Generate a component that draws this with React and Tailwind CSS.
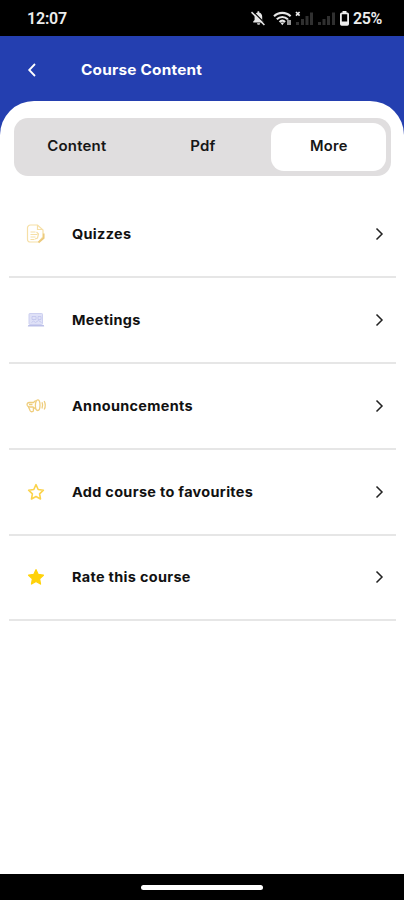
import React from 'react';

function StatusBar() {
  return (
    <div className="flex h-9 shrink-0 items-center justify-between bg-black pl-[27px] pr-[22px] text-[#ededed]">
      <span className="mt-px font-['Roboto',sans-serif] text-[16px] font-semibold leading-none tracking-[-0.2px]">12:07</span>
      <div className="flex items-center">
        <svg width="91" height="18" viewBox="38 0 91 18">
          <path d="M42.200 13.500h10.400v-1l-1.400-1.500V7.800c0-2.300-1.200-4-3-4.400V2.300h-1.700v1.100c-1.900.5-2.900 2.200-2.900 4.400V11l-1.400 1.500z" fill="#e6e6e6" />
          <path d="M46 14.200h3.200a1.600 1.600 0 0 1-3.200 0z" fill="#e6e6e6" />
          <path d="M42.200 2.600L54.700 15.100" stroke="#000" strokeWidth="1.200" />
          <path d="M40.500 3.100L53.400 16" stroke="#e6e6e6" strokeWidth="1.500" />
          <g fill="none" stroke="#e6e6e6" strokeWidth="2.100">
            <path d="M63 7.300c4.600-4.600 12-4.600 16.600 0" />
            <path d="M65.800 10.300c3.200-3 7.800-3 11 0" />
            <path d="M68.500 13c1.600-1.500 4-1.500 5.600 0" />
          </g>
          <path d="M69.300 13.500h4l-2 2.700z" fill="#e6e6e6" />
          <path d="M77 10.500v5.500M79 11v5" stroke="#e6e6e6" strokeWidth="1.300" />
          <path d="M85 3l3.600 3.600M88.600 3L85 6.600" stroke="#eee" strokeWidth="1.700" />
          <g fill="#303030">
            <rect x="85" y="13" width="3" height="3" />
            <rect x="90" y="10" width="3" height="6" />
            <rect x="94.500" y="7" width="3" height="9" />
            <rect x="99" y="3.500" width="3" height="12.500" />
            <rect x="107" y="13" width="3" height="3" />
            <rect x="111.500" y="10" width="3" height="6" />
            <rect x="116" y="7" width="3" height="9" />
            <rect x="121" y="3.500" width="3" height="12.500" />
          </g>
        </svg>
        <svg width="9" height="15" viewBox="0 0 9 15" className="mr-[4px]">
          <path d="M2.500 0h4v2.500h-4z" fill="#eee" />
          <rect x="0.900" y="2.400" width="7.200" height="11.500" rx="0.800" fill="none" stroke="#eee" strokeWidth="1.800" />
          <path d="M1 10.500h7V14H1z" fill="#eee" />
        </svg>
        <span className="mt-px font-['Roboto',sans-serif] text-[16px] font-semibold leading-none tracking-[-0.4px]">25%</span>
      </div>
    </div>
  );
}

function QuizIcon() {
  return (
    <svg width="20" height="20" viewBox="0 0 20 20" fill="none" stroke="#f6dfa6" strokeWidth="1.200">
      <path d="M4.500 1h7l5.500 5v7l-4.500 5H4a2.500 2.500 0 0 1-2.500-2.500v-11A3 3 0 0 1 4.500 1z" />
      <path d="M11.500 1v4.500H17M4.500 8h5M4.500 10.500h7M4.500 13h5M4.500 15.500h4" />
      <path d="M10.500 8l2 2-1 4-2.500 1" />
      <path d="M17.700 9.500v4.500l-5.200 4.500" stroke="#ecca7e" strokeWidth="1.700" />
    </svg>
  );
}

function MeetingIcon() {
  return (
    <svg width="20" height="20" viewBox="0 0 20 20" fill="none">
      <rect x="3" y="3.500" width="13.500" height="11" rx="0.800" fill="#dfe1f7" stroke="#cdd0f0" />
      <path d="M6 6.500h4v3H6zM12 6.500h3v3h-3zM5.500 12.500l2-1.500 2 1.500 3-2 3 2" stroke="#c0c4ec" strokeWidth="0.800" />
      <path d="M2.300 15h15.500l.4 1.500H1.800z" fill="#bbbfe8" />
    </svg>
  );
}

function AnnouncementIcon() {
  return (
    <svg width="22" height="20" viewBox="0 0 22 20" fill="none" stroke="#efcd7c" strokeWidth="1.300" strokeLinejoin="round">
      <path d="M9.700 4.500L7.500 6.500H3.500C1.500 6.500.6 8 1.300 9.500c.5 1 1.200 1.500 2.500 1.500H7l2.700 2" />
      <path d="M2.500 11l1.800 4c.8 1.300 3.300.8 3.100-.7V11M3 8.500h3.500" />
      <ellipse cx="11.700" cy="9.200" rx="2.300" ry="5.300" />
      <path d="M16 6.200c.9 2 .9 4.300 0 6.300M18.200 5c1.300 2.600 1.300 6 0 8.500" />
    </svg>
  );
}

function StarIcon({ filled }) {
  return (
    <svg width="20" height="20" viewBox="0 0 20 20" fill={filled ? '#ffd20a' : 'none'} stroke={filled ? '#ffd20a' : '#fbd34b'} strokeWidth={filled ? 1.3 : 1.6} strokeLinejoin="round">
      <path d="M10 2.700l2.200 4.800 5.200.7-3.800 3.600.9 5.200L10 14.500 5.500 17l.9-5.200-3.800-3.600 5.200-.7z" />
    </svg>
  );
}

const rows = [
  { label: 'Quizzes', icon: <QuizIcon /> },
  { label: 'Meetings', icon: <MeetingIcon /> },
  { label: 'Announcements', icon: <AnnouncementIcon /> },
  { label: 'Add course to favourites', icon: <StarIcon /> },
  { label: 'Rate this course', icon: <StarIcon filled /> },
];

function MenuRow({ label, icon }) {
  return (
    <div className="flex h-[85.750px] items-center border-b-2 border-[#e6e6e6] pl-[17px] pr-[12px]">
      <span className="flex w-[46px] shrink-0">{icon}</span>
      <span className="grow origin-left scale-x-[1.07] whitespace-nowrap font-['Inter',sans-serif] text-[13.500px] font-bold leading-5 tracking-[0.3px] text-[#111]">{label}</span>
      <svg width="9" height="14" viewBox="0 0 9 14" fill="none" stroke="#222" strokeWidth="1.500" className="relative shrink-0">
        <path d="M1.500 1.500L7 7l-5.500 5.500" />
      </svg>
    </div>
  );
}

export default function App() {
  return (
    <div className="flex h-[900px] w-[404px] flex-col overflow-hidden bg-white">
      <StatusBar />
      <header className="flex h-[65px] shrink-0 items-center bg-[#243fb0] pl-[27px] text-white">
        <svg width="10" height="14" viewBox="0 0 10 14" fill="none" stroke="white" strokeWidth="1.800" className="mt-[2px]">
          <path d="M8 1L2.200 7 8 13" />
        </svg>
        <h1 className="ml-[44px] mt-[3px] origin-left scale-x-[1.06] whitespace-nowrap font-['Inter',sans-serif] text-[14.500px] font-bold leading-5 tracking-[0.2px]">Course Content</h1>
      </header>
      <main className="grow bg-[linear-gradient(#243fb0_34px,white_34px)]">
        <div className="h-full rounded-t-[34px] bg-white pt-[17px]">
          <nav className="ml-[14px] mr-[13px] grid h-[58px] grid-cols-3 items-center rounded-[14px] bg-[#e0dedf] text-center font-['Inter',sans-serif] text-[14px] font-semibold tracking-[0.2px] text-[#161616]">
            <span className="-mt-1 scale-x-[1.070]">Content</span>
            <span className="-mt-1 scale-x-[1.070]">Pdf</span>
            <span className="ml-[6px] mr-[5px] flex h-[48px] items-center justify-center rounded-[13px] bg-white pb-1">
              <span className="scale-x-[1.050]">More</span>
            </span>
          </nav>
          <div className="ml-[9px] mr-[8px] mt-[16.500px]">
            {rows.map((row) => <MenuRow key={row.label} {...row} />)}
          </div>
        </div>
      </main>
      <footer className="flex h-[26px] shrink-0 items-center justify-center bg-black">
        <div className="h-[5px] w-[122px] rounded-full bg-white" />
      </footer>
    </div>
  );
}
